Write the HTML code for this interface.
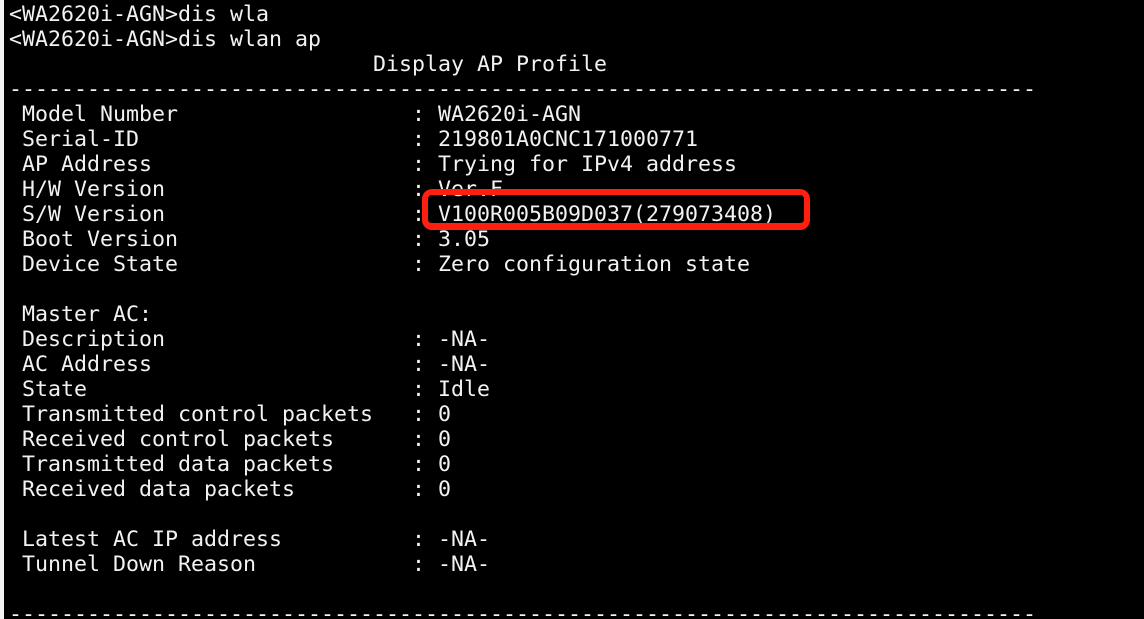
<!DOCTYPE html>
<html>
<head>
<meta charset="utf-8">
<style>
html,body{margin:0;padding:0;background:#f4f4f4;width:1144px;height:619px;overflow:hidden}
#term{position:absolute;left:4px;top:0;width:1140px;height:619px;background:#000;overflow:hidden}
pre{position:absolute;left:5px;top:2px;margin:0;font-family:"DejaVu Sans Mono","Liberation Mono",monospace;font-size:21.6px;line-height:25px;color:#f2f2f2;white-space:pre}
#box{position:absolute;left:422px;top:189px;width:376px;height:28px;border:6px solid #fe1f10;border-bottom-width:7px;border-radius:10px}
</style>
</head>
<body>
<div id="term">
<pre>&lt;WA2620i-AGN&gt;dis wla
&lt;WA2620i-AGN&gt;dis wlan ap
                            Display AP Profile
-------------------------------------------------------------------------------
 Model Number                  : WA2620i-AGN
 Serial-ID                     : 219801A0CNC171000771
 AP Address                    : Trying for IPv4 address
 H/W Version                   : Ver.F
 S/W Version                   : V100R005B09D037(279073408)
 Boot Version                  : 3.05
 Device State                  : Zero configuration state

 Master AC:
 Description                   : -NA-
 AC Address                    : -NA-
 State                         : Idle
 Transmitted control packets   : 0
 Received control packets      : 0
 Transmitted data packets      : 0
 Received data packets         : 0

 Latest AC IP address          : -NA-
 Tunnel Down Reason            : -NA-

-------------------------------------------------------------------------------</pre>
</div>
<div id="box"></div>
</body>
</html>
